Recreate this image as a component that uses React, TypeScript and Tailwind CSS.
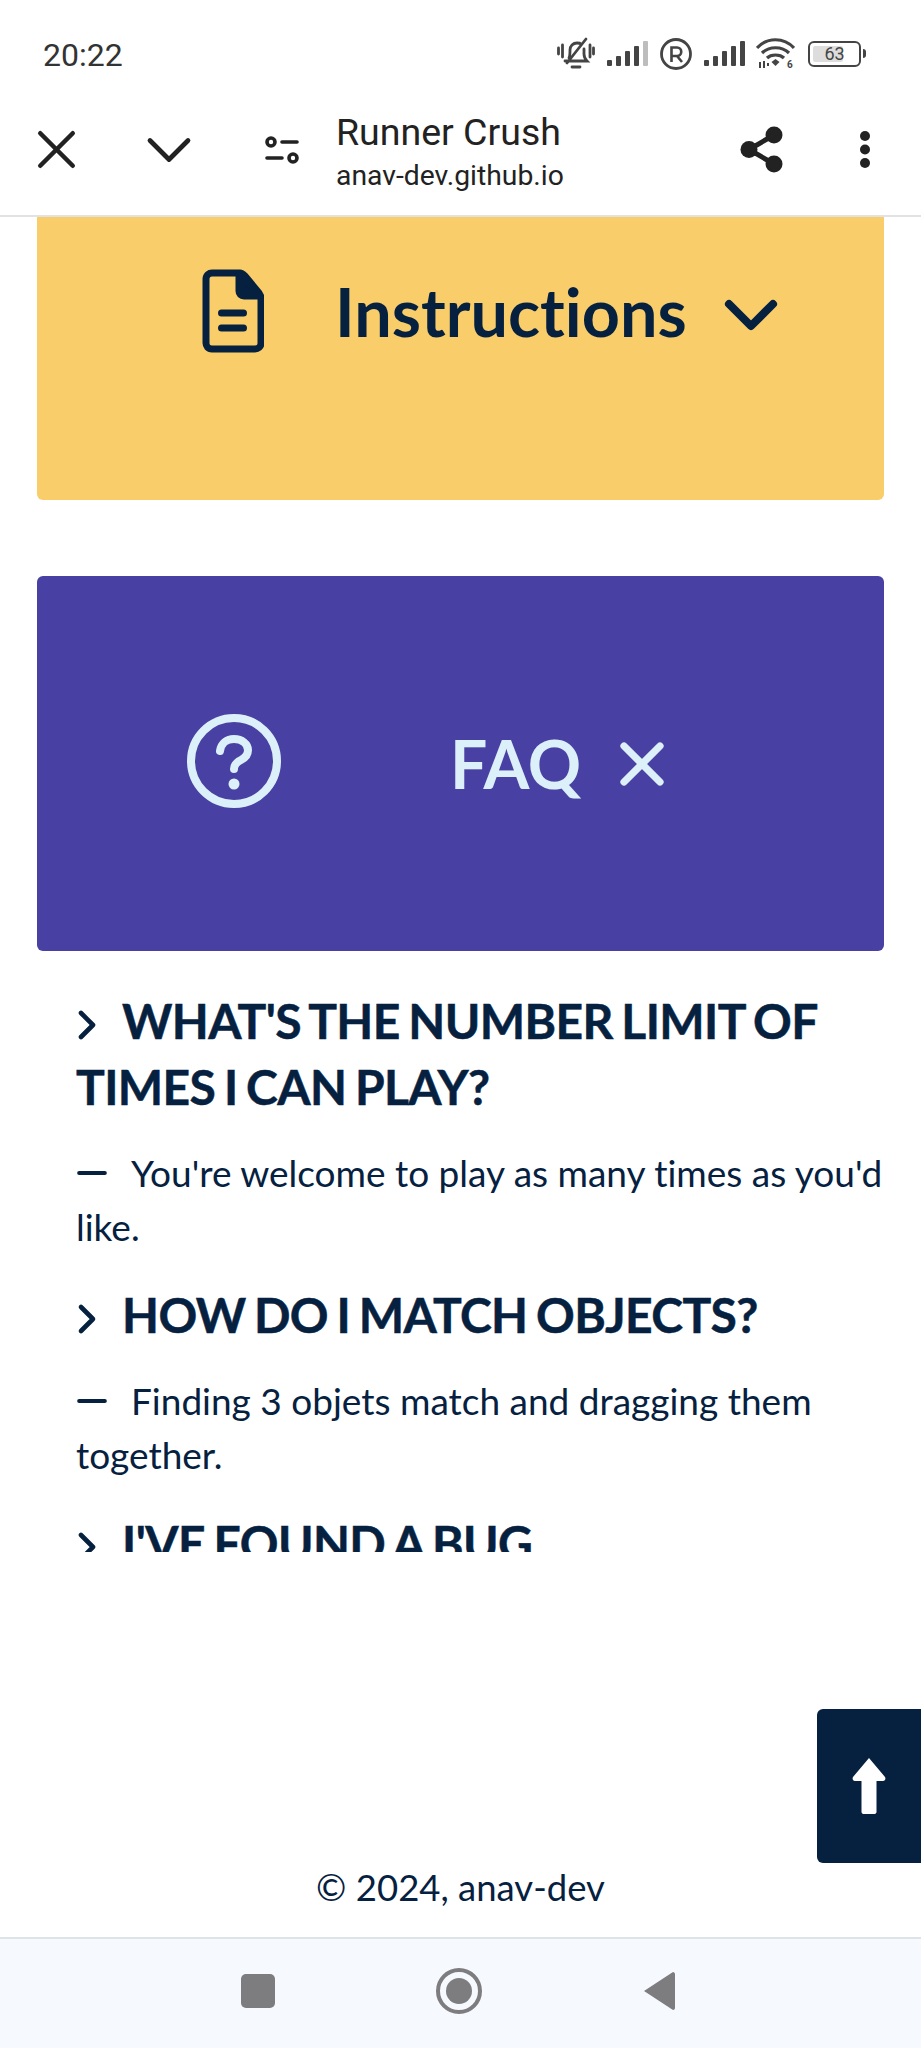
import { ChevronDown, ChevronRight, X, Minus } from 'lucide-react'

const navy = '#06213f'

const faqs = [
  { q: "WHAT'S THE NUMBER LIMIT OF TIMES I CAN PLAY?", a: "You're welcome to play as many times as you'd like." },
  { q: 'HOW DO I MATCH OBJECTS?', a: 'Finding 3 objets match and dragging them together.' },
  { q: "I'VE FOUND A BUG", a: '' },
]

const StatusIcons = () => (
  <div className="flex items-center text-[#444444]">
    <svg width="38" height="33" viewBox="0 0 38 33" fill="none" stroke="currentColor" strokeWidth="2.8" strokeLinecap="round">
      <path d="M12 21c1-2 1-4 1-8 0-4 3-7 7-7 2 0 3 0 4 1M27 12v5c0 3 1 5 3 7H8M29 2 10 26" />
      <path d="M15 30h8M1.500 11v6M5.500 8v12M33 8v12M36.500 11v6" />
    </svg>
    <svg className="ml-[12px]" width="41" height="26" viewBox="0 0 41 26" fill="currentColor">
      <rect x="0" y="19" width="5" height="6" rx="1" />
      <rect x="9" y="15" width="5" height="10" rx="1" />
      <rect x="18" y="10" width="5" height="15" rx="1" />
      <rect x="27" y="5" width="5" height="20" rx="1" />
      <rect x="36" y="0" width="5" height="25" rx="1" fill="#bdbdbd" />
    </svg>
    <svg className="ml-[12px]" width="32" height="32" viewBox="0 0 32 32" fill="none" stroke="currentColor">
      <circle cx="16" cy="16" r="14.500" strokeWidth="2.800" />
      <path d="M11.500 24V9.500h5.500a4 4 0 0 1 0 8.500h-5.500M17 18l5 6" strokeWidth="2.600" />
    </svg>
    <svg className="ml-[12px]" width="41" height="26" viewBox="0 0 41 26" fill="currentColor">
      <rect x="0" y="19" width="5" height="6" rx="1" />
      <rect x="9" y="15" width="5" height="10" rx="1" />
      <rect x="18" y="10" width="5" height="15" rx="1" />
      <rect x="27" y="5" width="5" height="20" rx="1" />
      <rect x="36" y="0" width="5" height="25" rx="1" />
    </svg>
    <svg className="ml-[11px]" width="39" height="33" viewBox="0 0 39 33" fill="none" stroke="currentColor" strokeWidth="3.200">
      <path d="M1 11c10-11 27-11 37 0M6 16c7-7 20-7 27 0M11 21c4-4 13-4 17 0" />
      <path d="M15.500 25l4-3 4 3-4 4z" fill="currentColor" stroke="none" />
      <path d="M4 25v6M8 24v7M12 26v3" strokeWidth="2" />
      <text x="31" y="31" fontSize="10" fontWeight="700" fill="currentColor" stroke="none" fontFamily="Roboto, sans-serif">6</text>
    </svg>
    <div className="ml-[13px] flex items-center">
      <div className="relative flex h-[26px] w-[53px] items-center justify-center rounded-[6px] border-2 border-[#444444]">
        <div className="absolute top-[3px] bottom-[3px] left-[3px] w-[30px] rounded-[2px] bg-[#dddddd]" />
        <span className="relative font-['Roboto',sans-serif] text-[18px] leading-none">63</span>
      </div>
      <div className="ml-[2px] h-[9px] w-[3px] rounded-r bg-[#444444]" />
    </div>
  </div>
)

function FaqEntry({ q, a }: { q: string; a: string }) {
  return (
    <div>
      <h3 className="text-[48px] font-bold leading-[66px] tracking-[-0.6px] [word-spacing:-2.5px] [-webkit-text-stroke:0.5px]">
        <ChevronRight className="mr-[11px] ml-[-13px] inline-block h-[48px] w-[48px] align-[-10px]" strokeWidth={2.3} />
        {q}
      </h3>
      {a && (
        <p className="mt-[26px] mb-[28px] text-[37px] leading-[54px]">
          <Minus className="mr-[17px] ml-[-6px] inline-block h-[44px] w-[44px] align-[-8px]" strokeWidth={2.2} />
          {a}
        </p>
      )}
    </div>
  )
}

export default function App() {
  return (
    <div className="relative flex h-[2048px] w-[921px] flex-col overflow-hidden bg-white font-['Lato',sans-serif] [font-variant-ligatures:none]" style={{ color: navy }}>
      {/* status bar */}
      <div className="flex h-[100px] items-start justify-between pt-[37px] pr-[55px] pl-[43px]">
        <span className="font-['Roboto',sans-serif] text-[32px] leading-[36px] text-[#333333]">20:22</span>
        <StatusIcons />
      </div>

      {/* custom tab toolbar */}
      <div className="flex h-[117px] items-center border-b-2 border-[#e2e2e2] pb-[16px] font-['Roboto',sans-serif] text-[#222222]">
        <X className="ml-[24px] h-[65px] w-[65px]" strokeWidth={1.67} />
        <ChevronDown className="ml-[42px] h-[76px] w-[76px]" strokeWidth={1.5} />
        <svg className="ml-[58px]" width="34" height="28" viewBox="0 0 34 28" fill="none" stroke="currentColor" strokeWidth="3.600" strokeLinecap="round">
          <circle cx="6" cy="6" r="4" />
          <path d="M17 6h15M2 22h15" />
          <circle cx="28" cy="22" r="4" />
        </svg>
        <div className="mt-[8px] ml-[37px] flex flex-col">
          <span className="text-[37.5px] leading-[44px]">Runner Crush</span>
          <span className="text-[28.3px] leading-[44px]">anav-dev.github.io</span>
        </div>
        <svg className="ml-auto" width="43" height="47" viewBox="0 0 43 47" fill="currentColor">
          <circle cx="34" cy="9" r="8.500" />
          <circle cx="9" cy="23.500" r="8.500" />
          <circle cx="34" cy="38" r="8.500" />
          <path d="M34 9 9 23.500 34 38" fill="none" stroke="currentColor" strokeWidth="5" />
        </svg>
        <svg className="mr-[51px] ml-[77px]" width="10" height="37" viewBox="0 0 10 37" fill="currentColor">
          <circle cx="5" cy="5" r="5" />
          <circle cx="5" cy="18.500" r="5" />
          <circle cx="5" cy="32" r="5" />
        </svg>
      </div>

      {/* page */}
      <main className="flex flex-1 flex-col">
        <div className="px-[37px]">
          <div className="flex h-[283px] rounded-b-[6px] bg-[#f9cd6a] pt-[52px] pl-[165px]">
            <div className="flex h-[84px] items-center">
              <svg width="62" height="84" viewBox="0 0 62 84" fill="none" stroke="currentColor" strokeWidth="7" strokeLinejoin="round">
                <path d="M10 4h28c2 0 3 1 5 3l14 17c1 2 2 3 2 5v45c0 4-3 6-6 6H10c-4 0-6-3-6-6V10c0-4 3-6 6-6z" />
                <path d="M37 5v17c0 3 2 5 5 5h16z" fill="currentColor" />
                <path d="M19.500 44h22M19.500 59h22" strokeLinecap="round" />
              </svg>
              <span className="ml-[71px] text-[66.5px] font-bold leading-none">Instructions</span>
              <ChevronDown className="mt-[8px] ml-[20px] h-[88px] w-[88px] shrink-0" strokeWidth={2.2} />
            </div>
          </div>

          <div className="mt-[76px] flex h-[375px] items-center rounded-[6px] bg-[#4840a3] pl-[149px] text-[#dcf0fa]">
            <svg className="mb-[5px]" width="96" height="96" viewBox="0 0 96 96" fill="none" stroke="currentColor" strokeWidth="8" strokeLinecap="round">
              <circle cx="48" cy="48" r="43" />
              <path d="M34 38c1-8 7-12 14-12 8 0 14 5 14 11 0 5-3 8-7 10-4 2-7 4-7 9" />
              <circle cx="48" cy="71" r="5.500" fill="currentColor" stroke="none" />
            </svg>
            <span className="ml-[168px] text-[66px] font-bold leading-none">FAQ</span>
            <X className="ml-[25px] h-[72px] w-[72px]" strokeWidth={2.4} />
          </div>
        </div>

        <div className="mt-[37px] h-[564px] overflow-hidden pl-[76px]">
          {faqs.map(f => (
            <FaqEntry key={f.q} q={f.q} a={f.a} />
          ))}
        </div>

        <footer className="mt-auto pb-[28px] text-center text-[36.5px] leading-[44px]">© 2024, anav-dev</footer>
      </main>

      {/* android nav bar */}
      <div className="flex h-[111px] items-center justify-center border-t-2 border-[#dfe3e8] bg-[#f6f9fe] pr-[6px] pb-[6px] text-[#7d7d80]">
        <div className="h-[34px] w-[34px] rounded-[5px] bg-current" />
        <div className="ml-[161px] flex h-[46px] w-[46px] items-center justify-center rounded-full border-[4px] border-current">
          <div className="h-[26px] w-[26px] rounded-full bg-current" />
        </div>
        <svg className="ml-[161px]" width="32" height="40" viewBox="0 0 32 40" fill="currentColor">
          <path d="M30 1 1 20l29 19c1 0 2-1 2-2V3c0-1-1-2-2-2z" />
        </svg>
      </div>

      {/* back to top */}
      <div className="absolute top-[1709px] right-0 flex h-[154px] w-[104px] items-center justify-center rounded-[6px] rounded-r-none bg-[#06213f] text-white">
        <svg width="36" height="56" viewBox="0 0 36 56" fill="currentColor">
          <path d="M18 0 34 19c1 2 0 4-2 4H25.500v31c0 1-1 2-2 2h-11c-1 0-2-1-2-2V23H4c-2 0-3-2-2-4z" />
        </svg>
      </div>
    </div>
  )
}
